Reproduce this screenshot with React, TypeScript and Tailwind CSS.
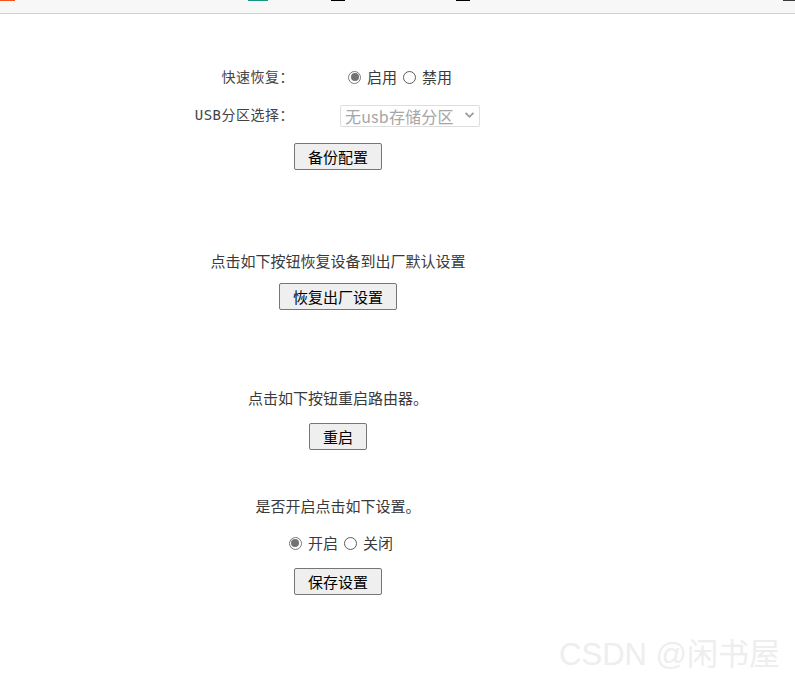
import { useState } from "react";

const bodyFont = { fontFamily: '"Noto Sans CJK SC", "Liberation Sans", sans-serif' };
const labelFont = { fontFamily: '"DejaVu Sans Mono", "Noto Sans CJK SC", monospace' };

function Radio({ checked, onClick, label }: { checked: boolean; onClick: () => void; label: string }) {
  return (
    <label className="flex items-center cursor-pointer" onClick={onClick}>
      <span
        className={`w-[13px] h-[13px] rounded-full border flex items-center justify-center bg-white ${
          checked ? "border-[#7a7a7a]" : "border-[#5c5c5c]"
        }`}
      >
        {checked && <span className="w-[8px] h-[8px] rounded-full bg-[#737373]" />}
      </span>
      <span className="ml-[6px] text-[15px] leading-[20px] text-[#3a3a3a]">{label}</span>
    </label>
  );
}

function Btn({ children }: { children: React.ReactNode }) {
  return (
    <button
      type="button"
      className="h-[27px] px-[13px] border border-[#767676] rounded-[2px] bg-[#efefef] text-[15px] leading-none text-black hover:bg-[#e5e5e5]"
    >
      {children}
    </button>
  );
}

export default function App() {
  const [quick, setQuick] = useState(true);
  const [enable, setEnable] = useState(true);

  return (
    <div className="relative w-[795px] h-[681px] bg-white overflow-hidden" style={bodyFont}>
      {/* browser tab strip remnant */}
      <div className="h-[14px] bg-[#f7f7f7] border-b border-[#d3d3d3] flex items-start">
        <div className="w-[15px] h-[1px] bg-[#f4511e]" />
        <div className="ml-[233px] w-[20px] h-[1px] bg-[#16977f]" />
        <div className="ml-[63px] w-[14px] h-[1px] bg-black" />
        <div className="ml-[111px] w-[14px] h-[1px] bg-black" />
        <div className="ml-auto w-[12px] h-[1px] bg-[#3c3c3c]" />
      </div>

      <div className="w-[676px] flex flex-col items-center pt-[52px] text-[#3a3a3a]">
        {/* 快速恢复 */}
        <div className="w-full flex items-center h-[22px]">
          <div className="w-[294px] text-right text-[14px] tracking-[0.5px] text-[#444]" style={labelFont}>
            快速恢复：
          </div>
          <div className="ml-[54px] flex items-center gap-[6px]">
            <Radio checked={quick} onClick={() => setQuick(true)} label="启用" />
            <Radio checked={!quick} onClick={() => setQuick(false)} label="禁用" />
          </div>
        </div>

        {/* USB分区选择 */}
        <div className="w-full flex items-center h-[22px] mt-[16px]">
          <div className="w-[294px] text-right text-[14px] tracking-[0.5px] text-[#444]" style={labelFont}>
            USB分区选择：
          </div>
          <div className="ml-[46px] relative w-[140px] h-[22px]">
            <select
              disabled
              className="appearance-none w-full h-full border border-[#dedede] rounded-[2px] bg-white pl-[4px] text-[16px] leading-[20px] text-[#a6a6a6] tracking-[0.2px]"
            >
              <option>无usb存储分区</option>
            </select>
            <svg
              className="absolute right-[5px] top-[7px] pointer-events-none"
              width="11"
              height="8"
              viewBox="0 0 11 8"
              fill="none"
            >
              <path d="M1.5 1.8 L5.5 5.8 L9.5 1.8" stroke="#9a9a9a" strokeWidth="1.7" />
            </svg>
          </div>
        </div>

        <div className="mt-[17px]">
          <Btn>备份配置</Btn>
        </div>

        {/* 恢复出厂 */}
        <p className="mt-[81px] text-[15px] leading-[20px]">点击如下按钮恢复设备到出厂默认设置</p>
        <div className="mt-[12px]">
          <Btn>恢复出厂设置</Btn>
        </div>

        {/* 重启 */}
        <p className="mt-[78px] text-[15px] leading-[20px]">点击如下按钮重启路由器。</p>
        <div className="mt-[15px]">
          <Btn>重启</Btn>
        </div>

        {/* 开关 */}
        <p className="mt-[46px] text-[15px] leading-[20px]">是否开启点击如下设置。</p>
        <div className="mt-[17px] ml-[6px] flex items-center gap-[6px] h-[20px]">
          <Radio checked={enable} onClick={() => setEnable(true)} label="开启" />
          <Radio checked={!enable} onClick={() => setEnable(false)} label="关闭" />
        </div>
        <div className="mt-[15px]">
          <Btn>保存设置</Btn>
        </div>
      </div>

      <div
        className="absolute right-[15px] bottom-[8px] text-[31px] leading-[36px] text-[#eeeeee] select-none"
        style={{ fontFamily: '"Liberation Sans", "Noto Sans CJK SC", sans-serif' }}
      >
        CSDN @闲书屋
      </div>
    </div>
  );
}
